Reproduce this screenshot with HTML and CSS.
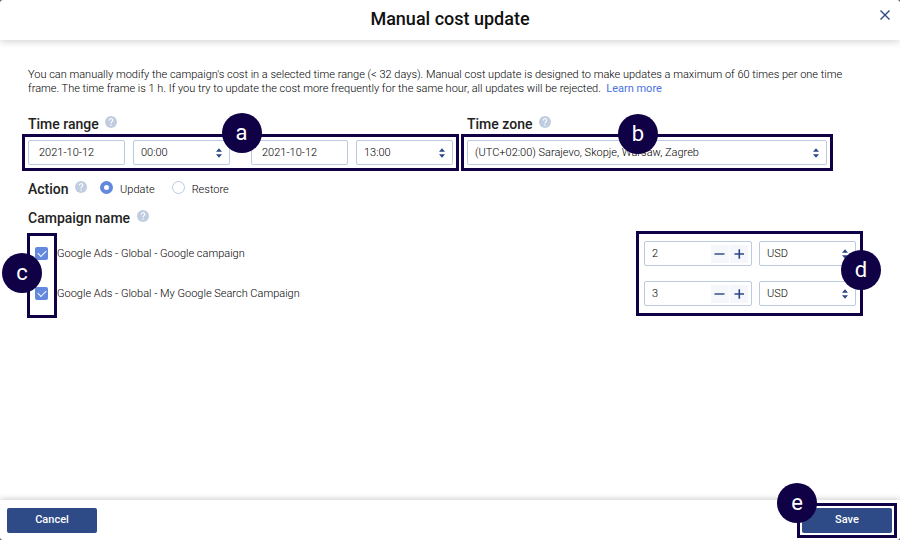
FILE: index.html
```html
<!DOCTYPE html>
<html lang="en">
<head>
    <meta charset="UTF-8">
    <meta name="viewport" content="width=device-width, initial-scale=1.0">
    <title>Manual cost update</title>
    <link rel="stylesheet" href="styles.css">
</head>
<body>
    <svg class="symbols" aria-hidden="true">
        <symbol id="arrows" viewBox="0 0 6 10">
            <path d="M3 0.3 L6 3.7 H0 Z M0 6.3 H6 L3 9.7 Z" fill="#2b4785"/>
        </symbol>
        <symbol id="minus" viewBox="0 0 18 18">
            <path d="M3.5 9 H13.5" stroke="#3f5a96" stroke-width="1.6"/>
        </symbol>
        <symbol id="plus" viewBox="0 0 18 18">
            <path d="M4.5 9 H14 M9.3 4.3 V13.7" stroke="#2b4785" stroke-width="1.6"/>
        </symbol>
        <symbol id="help" viewBox="0 0 12 12">
            <circle cx="6" cy="6" r="6" fill="#c0cde0"/>
            <path d="M4.2 4.5 C4.2 2.1 7.8 2.1 7.8 4.3 C7.8 5.7 6 5.7 6 7.4" fill="none" stroke="#fff" stroke-width="1.1"/>
            <circle cx="6" cy="9.3" r="0.7" fill="#fff"/>
        </symbol>
    </svg>

    <form class="dialog">
        <header class="dialog-header">
            <h1>Manual cost update</h1>
            <button type="button" class="close" aria-label="Close">
                <svg width="10" height="10" viewBox="0 0 10 10"><path d="M0.5 0.5 L9.5 9.5 M9.5 0.5 L0.5 9.5" stroke="#2b4785" stroke-width="1.4"/></svg>
            </button>
        </header>

        <main class="dialog-body">
            <p class="intro">You can manually modify the campaign's cost in a selected time range (&lt; 32 days). Manual cost update is designed to make updates a maximum of 60 times per one time frame. The time frame is 1 h. If you try to update the cost more frequently for the same hour, all updates will be rejected. &nbsp;<a href="#">Learn more</a></p>

            <div class="time-row">
                <section class="time-range">
                    <h2>Time range <svg class="help"><use href="#help"/></svg></h2>
                    <div class="range-fields callout">
                        <div class="pair">
                            <input type="text" class="date" value="2021-10-12" aria-label="Start date">
                            <div class="select">
                                <select aria-label="Start time"><option>00:00</option></select>
                                <svg class="arrows"><use href="#arrows"/></svg>
                            </div>
                        </div>
                        <div class="pair">
                            <input type="text" class="date" value="2021-10-12" aria-label="End date">
                            <div class="select">
                                <select aria-label="End time"><option>13:00</option></select>
                                <svg class="arrows"><use href="#arrows"/></svg>
                            </div>
                        </div>
                        <span class="badge badge-a">a</span>
                    </div>
                </section>
                <section class="time-zone">
                    <h2><label for="zone">Time zone</label> <svg class="help"><use href="#help"/></svg></h2>
                    <div class="select callout">
                        <select id="zone"><option>(UTC+02:00) Sarajevo, Skopje, Warsaw, Zagreb</option></select>
                        <svg class="arrows"><use href="#arrows"/></svg>
                        <span class="badge badge-b">b</span>
                    </div>
                </section>
            </div>

            <div class="action-row">
                <h2>Action <svg class="help"><use href="#help"/></svg></h2>
                <input type="radio" name="action" id="update" checked>
                <label for="update">Update</label>
                <input type="radio" name="action" id="restore">
                <label for="restore">Restore</label>
            </div>

            <h2>Campaign name <svg class="help"><use href="#help"/></svg></h2>
            <div class="campaigns">
                <div class="names">
                    <div class="campaign">
                        <input type="checkbox" id="campaign1" checked>
                        <label for="campaign1">Google Ads - Global - Google campaign</label>
                    </div>
                    <div class="campaign">
                        <input type="checkbox" id="campaign2" checked>
                        <label for="campaign2">Google Ads - Global - My Google Search Campaign</label>
                    </div>
                    <span class="frame-c"></span>
                    <span class="badge badge-c">c</span>
                </div>
                <div class="costs callout">
                    <div class="cost">
                        <div class="number">
                            <input type="text" value="2" aria-label="Cost of Google campaign">
                            <button type="button" aria-label="Decrease"><svg><use href="#minus"/></svg></button>
                            <button type="button" aria-label="Increase"><svg><use href="#plus"/></svg></button>
                        </div>
                        <div class="select">
                            <select aria-label="Currency"><option>USD</option></select>
                            <svg class="arrows"><use href="#arrows"/></svg>
                        </div>
                    </div>
                    <div class="cost">
                        <div class="number">
                            <input type="text" value="3" aria-label="Cost of My Google Search Campaign">
                            <button type="button" aria-label="Decrease"><svg><use href="#minus"/></svg></button>
                            <button type="button" aria-label="Increase"><svg><use href="#plus"/></svg></button>
                        </div>
                        <div class="select">
                            <select aria-label="Currency"><option>USD</option></select>
                            <svg class="arrows"><use href="#arrows"/></svg>
                        </div>
                    </div>
                    <span class="badge badge-d">d</span>
                </div>
            </div>
        </main>

        <footer class="dialog-footer">
            <button type="button" class="btn">Cancel</button>
            <div class="save callout">
                <button type="submit" class="btn">Save</button>
                <span class="badge badge-e">e</span>
            </div>
        </footer>
    </form>
</body>
</html>
```
FILE: styles.css
```css
* {
    box-sizing: border-box;
}
body {
    margin: 0;
    background-color: #555;
    font-family: Roboto, "Liberation Sans", sans-serif;
    font-size: 11px;
    font-weight: 300;
    line-height: 14px;
    color: #000;
}
input, select, button {
    margin: 0;
    font: inherit;
    color: inherit;
}
.symbols {
    position: absolute;
    width: 0;
    height: 0;
}
.dialog {
    display: flex;
    flex-direction: column;
    min-height: 100vh;
    background: white;
    border-radius: 3px;
    overflow: hidden;
}

/* header */
.dialog-header {
    display: grid;
    grid-template-columns: 30px 1fr 30px;
    height: 40px;
    box-shadow: 0 1px 8px rgba(0, 0, 0, 0.2);
}
h1 {
    grid-column: 2;
    margin: 0;
    font-size: 18px;
    font-weight: 500;
    line-height: 38px;
    text-align: center;
    color: #111;
}
.close {
    height: 30px;
    padding: 0;
    border: none;
    background: none;
    cursor: pointer;
}
.close svg {
    display: block;
    margin: 0 auto;
}

/* body */
.dialog-body {
    flex: 1;
    padding: 28px 44px 20px 28px;
}
.intro {
    margin: 0 0 18px;
}
.intro a {
    color: #4a72e0;
    font-weight: 400;
    text-decoration: none;
}
h2 {
    margin: 0;
    font-size: 14px;
    font-weight: 500;
    line-height: 20px;
    color: #222;
}
.help {
    width: 12px;
    height: 12px;
    margin-left: 3px;
    vertical-align: 1px;
}
.time-row {
    display: flex;
    gap: 14px;
    margin-bottom: 14px;
    padding-right: 29px;
}
.time-range {
    flex: 425;
}
.time-zone {
    flex: 360;
}
.time-row h2 {
    margin-bottom: 6px;
}
.range-fields {
    display: flex;
    gap: 21px;
}
.pair {
    flex: 1;
    display: grid;
    grid-template-columns: 1fr 1fr;
    gap: 8px;
}
.date, select, .number {
    width: 100%;
    height: 25px;
    border: 1px solid #bccbdf;
    border-radius: 2px;
    background: white;
}
.date {
    min-width: 0;
    padding: 0 10px;
}
.select {
    position: relative;
}
select {
    display: block;
    padding: 0 20px 0 7px;
    appearance: none;
}
.arrows {
    position: absolute;
    top: 8px;
    right: 8px;
    width: 6px;
    height: 10px;
    pointer-events: none;
}

.action-row {
    display: flex;
    align-items: center;
    margin-bottom: 9px;
}
.action-row input {
    width: 13px;
    height: 13px;
    margin: 0 7px 3px 13px;
    border: 1px solid #bccbdf;
    border-radius: 50%;
    background: white;
    appearance: none;
}
.action-row label {
    padding-top: 2px;
}
.action-row label + input {
    margin-left: 17px;
}
.action-row input:checked {
    border: 4px solid #6488de;
}

.campaigns {
    display: flex;
    justify-content: space-between;
    margin-top: 13px;
}
.names {
    position: relative;
    padding-left: 7px;
}
.names, .costs {
    display: flex;
    flex-direction: column;
    gap: 15px;
}
.campaign {
    display: flex;
    align-items: center;
    gap: 9px;
    height: 25px;
}
.campaign input {
    width: 13px;
    height: 13px;
    border-radius: 2px;
    background: #6488de;
    appearance: none;
}
.campaign input:checked::before {
    content: "";
    display: block;
    width: 7px;
    height: 4px;
    margin: 3px;
    border: solid white;
    border-width: 0 0 1px 1px;
    transform: rotate(-45deg);
}
.cost {
    display: grid;
    grid-template-columns: 108px 97px;
    gap: 7px;
}
.number {
    display: flex;
    align-items: center;
    gap: 1px;
    padding: 0 3px 0 7px;
}
.number input {
    flex: 1;
    min-width: 0;
    padding: 0;
    border: none;
    background: none;
}
.number button {
    width: 18px;
    height: 18px;
    padding: 0;
    border: none;
    background: #f5f7fa;
}
.number svg {
    display: block;
    width: 18px;
    height: 18px;
}

/* footer */
.dialog-footer {
    display: flex;
    justify-content: space-between;
    padding: 8px 8px 7px 7px;
    box-shadow: 0 -1px 6px rgba(0, 0, 0, 0.2);
}
.btn {
    display: block;
    width: 90px;
    height: 25px;
    padding: 0 0 2px;
    border: none;
    border-radius: 2px;
    background: #2e4a87;
    color: white;
    font-weight: 500;
    cursor: pointer;
}

/* lettered callouts drawn over the form */
.callout {
    position: relative;
}
.callout::after, .frame-c {
    content: "";
    position: absolute;
    inset: -6px;
    border: 3px solid #100046;
    pointer-events: none;
}
.costs::after {
    inset: -10px -7px -10px -8px;
}
.save::after {
    inset: -5px;
}
.frame-c {
    inset: -8px auto -12px -1px;
    width: 30px;
}
.badge {
    position: absolute;
    z-index: 1;
    width: 40px;
    height: 40px;
    border-radius: 50%;
    background: #100046;
    color: white;
    font-size: 22px;
    font-weight: 400;
    line-height: 40px;
    text-align: center;
}
.badge-a {
    top: -27px;
    left: calc(50% - 19px);
}
.badge-b {
    top: -26px;
    left: calc(50% - 29px);
}
.badge-c {
    top: 12px;
    left: -26px;
}
.badge-d {
    top: 9px;
    right: -25px;
}
.badge-e {
    top: -25px;
    left: -25px;
}
```
